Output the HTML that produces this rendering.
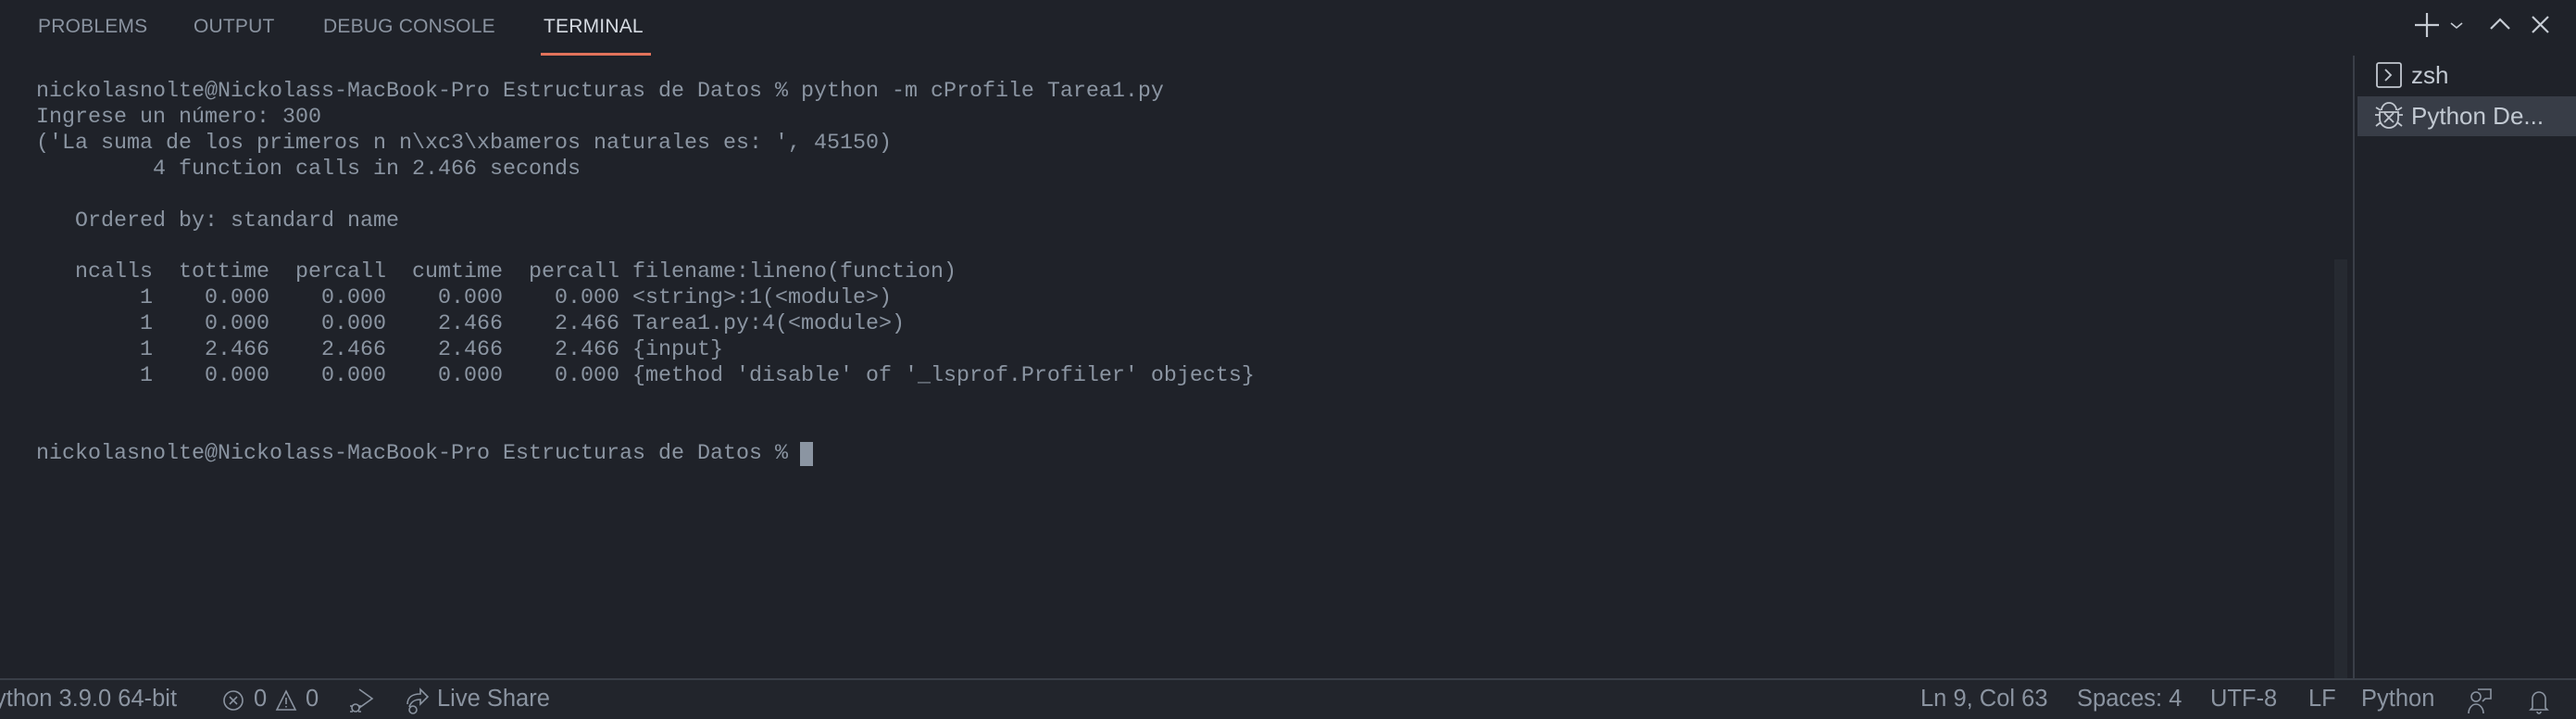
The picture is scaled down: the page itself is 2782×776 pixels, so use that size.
<!DOCTYPE html>
<html><head><meta charset="utf-8"><style>
html,body{margin:0;padding:0;width:2782px;height:776px;overflow:hidden;background:#1f2229;}
body{position:relative;font-family:"Liberation Sans",sans-serif;}
.tab{position:absolute;top:17px;font-size:21px;color:#8a93a0;letter-spacing:0.2px}
.term{position:absolute;left:39px;top:86px;font-family:"Liberation Mono",monospace;font-size:23.33px;line-height:27.9px;color:#8b95a2;white-space:pre;margin:0}
.sb{position:absolute;top:732px;left:0;width:2782px;height:44px;background:#22252c;border-top:2px solid #393e47;box-sizing:border-box}
.si{position:absolute;top:6px;font-size:25.5px;color:#8b94a1;white-space:nowrap}
</style></head><body>
<div class="tab" style="left:41px">PROBLEMS</div>
<div class="tab" style="left:209px">OUTPUT</div>
<div class="tab" style="left:349px">DEBUG CONSOLE</div>
<div class="tab" style="left:587px;color:#d6dbe2">TERMINAL</div>
<div style="position:absolute;left:584px;top:57px;width:119px;height:3px;background:#e2725b"></div>

<svg style="position:absolute;left:2605px;top:12px" width="170" height="30" viewBox="0 0 170 30" fill="none" stroke="#c6ccd4" stroke-width="2.2">
<path d="M16 2v26M3 15h26"/>
<path d="M42 13l6 5 6-5" stroke-width="1.6"/>
<path d="M85 19l10-10 10 10"/>
<path d="M130 6l17 17M147 6l-17 17"/>
</svg>

<pre class="term">nickolasnolte@Nickolass-MacBook-Pro Estructuras de Datos % python -m cProfile Tarea1.py
Ingrese un número: 300
('La suma de los primeros n n\xc3\xbameros naturales es: ', 45150)
         4 function calls in 2.466 seconds

   Ordered by: standard name

   ncalls  tottime  percall  cumtime  percall filename:lineno(function)
        1    0.000    0.000    0.000    0.000 &lt;string&gt;:1(&lt;module&gt;)
        1    0.000    0.000    2.466    2.466 Tarea1.py:4(&lt;module&gt;)
        1    2.466    2.466    2.466    2.466 {input}
        1    0.000    0.000    0.000    0.000 {method 'disable' of '_lsprof.Profiler' objects}


nickolasnolte@Nickolass-MacBook-Pro Estructuras de Datos % </pre>
<div style="position:absolute;left:864px;top:477px;width:14px;height:26px;background:#8b95a2"></div>

<div style="position:absolute;left:2521px;top:280px;width:14px;height:452px;background:#262a31"></div>
<div style="position:absolute;left:2541px;top:60px;width:2px;height:672px;background:#3a3f48"></div>
<div style="position:absolute;left:2546px;top:104px;width:236px;height:43px;background:#383d47"></div>
<svg style="position:absolute;left:2563px;top:66px" width="34" height="80" viewBox="0 0 34 80" fill="none" stroke="#c2c8d0" stroke-width="1.8">
<rect x="4" y="2" width="26" height="26" rx="2"/>
<path d="M13 9l6 6-6 6"/>
<path d="M9 53a8 8 0 0 1 16 0M7 55h20v7a10 10 0 0 1-20 0z M2 58h5M27 58h5M3 50l5 3M31 50l-5 3M3 70l5-4M31 70l-5-4M12 56l10 10M22 56l-10 10"/>
</svg>
<div style="position:absolute;left:2604px;top:66px;font-size:26px;color:#c2c9d2">zsh</div>
<div style="position:absolute;left:2604px;top:110px;font-size:26px;color:#c2c9d2">Python De...</div>

<div class="sb">
<div class="si" style="left:-6px">ython 3.9.0 64-bit</div>
<svg style="position:absolute;left:240px;top:9px" width="110" height="26" viewBox="0 0 110 26" fill="none" stroke="#8b94a1" stroke-width="1.6">
<circle cx="12" cy="13" r="10"/><path d="M8 9l8 8M16 9l-8 8"/>
<path d="M69 3l10 20H59z"/><path d="M69 10v7M69 19v1.5"/>
</svg>
<div class="si" style="left:274px">0</div>
<div class="si" style="left:330px">0</div>
<svg style="position:absolute;left:376px;top:8px" width="30" height="30" viewBox="0 0 30 30" fill="none" stroke="#8b94a1" stroke-width="1.6">
<path d="M12 2l14 10-14 10"/><circle cx="8" cy="22" r="4"/><path d="M2 20h3M11 20h3M2 26h3M11 26h3"/>
</svg>
<svg style="position:absolute;left:436px;top:8px" width="30" height="30" viewBox="0 0 30 30" fill="none" stroke="#8b94a1" stroke-width="1.6">
<path d="M4 18c0-8 6-11 14-11V2l8 8-8 8v-5c-6 0-10 2-12 8"/><circle cx="10" cy="24" r="4"/>
</svg>
<div class="si" style="left:472px">Live Share</div>
<div class="si" style="left:2074px">Ln 9, Col 63</div>
<div class="si" style="left:2243px">Spaces: 4</div>
<div class="si" style="left:2387px">UTF-8</div>
<div class="si" style="left:2493px">LF</div>
<div class="si" style="left:2550px">Python</div>
<svg style="position:absolute;left:2664px;top:8px" width="100" height="30" viewBox="0 0 100 30" fill="none" stroke="#8b94a1" stroke-width="1.6">
<circle cx="10" cy="10" r="5"/><path d="M2 28c0-6 4-10 8-10s8 4 8 10"/><path d="M12 2h14v10h-6l-3 3"/>
<path d="M71 22V12a7 7 0 0 1 14 0v10l2 2H69zM76 26a2 2 0 0 0 4 0"/>
</svg>
</div>
</body></html>
